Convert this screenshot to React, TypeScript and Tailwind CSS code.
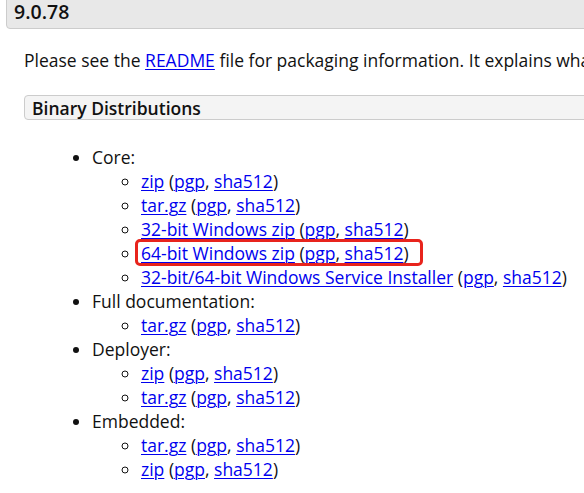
const A = ({ children }: { children: React.ReactNode }) => (
  <a href="#" className="text-[#0000ee] underline underline-offset-[2px] decoration-1">
    {children}
  </a>
);

const Sig = () => (
  <>
    {" "}(<A>pgp</A>, <A>sha512</A>)
  </>
);

const groups: { title: string; items: string[] }[] = [
  {
    title: "Core:",
    items: ["zip", "tar.gz", "32-bit Windows zip", "64-bit Windows zip", "32-bit/64-bit Windows Service Installer"],
  },
  { title: "Full documentation:", items: ["tar.gz"] },
  { title: "Deployer:", items: ["zip", "tar.gz"] },
  { title: "Embedded:", items: ["tar.gz", "zip"] },
];

export default function App() {
  return (
    <div className="h-[493px] w-[584px] overflow-hidden bg-white font-['Open_Sans',sans-serif] text-[17.5px] text-[#111]">
      <div className="w-[700px]">
        {/* version heading */}
        <div className="-mt-[8px] ml-[6px] flex h-[37px] items-end rounded-[4px] border border-[#ccc] bg-[#e8e8e8] pb-[3px] pl-[7px]">
          <h3 className="text-[19.5px] font-semibold leading-[26px]">9.0.78</h3>
        </div>

        <p className="ml-[24px] mt-[20px] whitespace-nowrap leading-[22px]">
          Please see the <A>README</A> file for packaging information. It explains what every distribution contains.
        </p>

        <div className="ml-[24px] mt-[24px] flex h-[25px] items-center rounded-[4px] border border-[#ccc] bg-[#f4f4f4] pl-[7px]">
          <h4 className="text-[17.5px] font-semibold leading-[22px]">Binary Distributions</h4>
        </div>

        <ul className="mt-[25px] list-disc pl-[92px] leading-[24px]">
          {groups.map((g) => (
            <li key={g.title}>
              {g.title}
              <ul className="list-[circle] pl-[49px]">
                {g.items.map((it) => (
                  <li key={it}>
                    {it === "64-bit Windows zip" ? (
                      <span className="relative">
                        <A>{it}</A>
                        <Sig />
                        <span className="absolute -left-[6px] -right-[14px] -top-[2px] -bottom-[1px] rounded-[5px] border-[3px] border-[#e8241c]" />
                      </span>
                    ) : (
                      <>
                        <A>{it}</A>
                        <Sig />
                      </>
                    )}
                  </li>
                ))}
              </ul>
            </li>
          ))}
        </ul>
      </div>
    </div>
  );
}
